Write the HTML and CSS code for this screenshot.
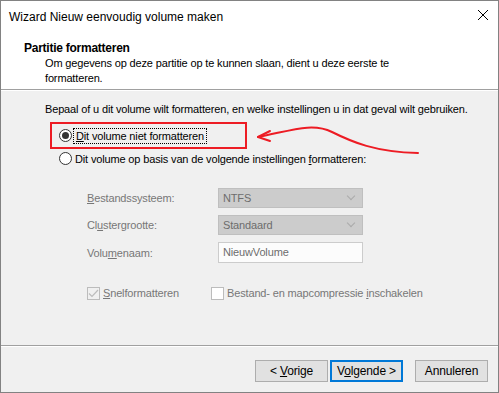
FILE: index.html
```html
<!DOCTYPE html>
<html lang="nl">
<head>
  <meta charset="UTF-8" />
  <title>Wizard Nieuw eenvoudig volume maken</title>
  <link rel="stylesheet" href="styles.css">
</head>
<body>
  <div class="window">
    <div class="titlebar">
      <span class="title">Wizard Nieuw eenvoudig volume maken</span>
      <svg class="close" width="12" height="12" viewBox="0 0 12 12">
        <path d="M1 1 L11 11 M11 1 L1 11" stroke="#000" stroke-width="1" fill="none"/>
      </svg>
    </div>

    <div class="header">
      <div class="heading">Partitie formatteren</div>
      <div class="subtext">Om gegevens op deze partitie op te kunnen slaan, dient u deze eerste te<br>formatteren.</div>
    </div>
    <div class="sep"></div>

    <div class="content">
      <p class="intro">Bepaal of u dit volume wilt formatteren, en welke instellingen u in dat geval wilt gebruiken.</p>

      <div class="options">
        <div class="radio-row">
          <span class="radio checked"></span>
          <span class="focus"><u>D</u>it volume niet formatteren</span>
        </div>
        <div class="radio-row">
          <span class="radio"></span>
          <span>Dit volume op basis van de volgende instellingen <u>f</u>ormatteren:</span>
        </div>
      </div>

      <div class="settings">
        <span class="label"><u>B</u>estandssysteem:</span>
        <div class="combo"><span>NTFS</span><span class="chev"></span></div>
        <span class="label">Cl<u>u</u>stergrootte:</span>
        <div class="combo"><span>Standaard</span><span class="chev"></span></div>
        <span class="label">Volu<u>m</u>enaam:</span>
        <div class="textbox">NieuwVolume</div>
      </div>

      <div class="checks">
        <div class="check-row">
          <span class="checkbox checked">
            <svg width="11" height="11" viewBox="0 0 11 11"><path d="M1 5.5 L4 8.5 L10 2" stroke="#bcbcbc" stroke-width="1.2" fill="none"/></svg>
          </span>
          <span><u>S</u>nelformatteren</span>
        </div>
        <div class="check-row">
          <span class="checkbox"></span>
          <span>Bestand- en mapcompressie <u>i</u>nschakelen</span>
        </div>
      </div>

      <!-- annotation drawn over the screenshot -->
      <div class="annot-box"></div>
      <svg class="annot-arrow" width="499" height="80" viewBox="0 100 499 80">
        <path d="M258 137 C 290 131, 312 122, 332 132 S 375 152, 418 153" stroke="#ed1c24" stroke-width="2" fill="none" stroke-linecap="round"/>
        <path d="M270 131 L258 137 L270 141" stroke="#ed1c24" stroke-width="2" fill="none" stroke-linecap="round" stroke-linejoin="round"/>
      </svg>
    </div>

    <div class="sep"></div>
    <div class="footer">
      <button class="btn">&lt; <u>V</u>orige</button>
      <button class="btn default">V<u>o</u>lgende &gt;</button>
      <button class="btn cancel">Annuleren</button>
    </div>
  </div>
</body>
</html>
```

FILE: styles.css
```css
html, body {
  margin: 0;
  padding: 0;
  background: #f0f0f0;
  font-family: 'Liberation Sans', Arial, sans-serif;
  font-size: 11px;
  letter-spacing: -0.15px;
  color: #000;
}
.window {
  width: 499px;
  height: 393px;
  box-sizing: border-box;
  border: 1px solid #828282;
  display: flex;
  flex-direction: column;
  background: #f0f0f0;
}
.titlebar {
  height: 30px;
  background: #fff;
  display: flex;
  align-items: center;
  justify-content: space-between;
  padding: 0 9px 0 8px;
  flex-shrink: 0;
  font-size: 12px;
  letter-spacing: 0;
}
.title {
  padding-top: 1px;
}
.close {
  margin-top: -2px;
}
.header {
  background: #fff;
  padding: 10px 0 4px 23px;
  height: 44px;
  flex-shrink: 0;
}
.heading {
  font-weight: bold;
  font-size: 12px;
  letter-spacing: -0.25px;
  line-height: 15px;
}
.subtext {
  line-height: 15px;
  padding-left: 21px;
}
.sep {
  height: 1px;
  border-top: 1px solid #a0a0a0;
  background: #fff;
  flex-shrink: 0;
}
.content {
  flex: 1;
  position: relative;
  padding: 11px 0 0 44px;
}
.intro {
  margin: 0;
  line-height: 15px;
}
.options {
  margin-top: 7px;
  padding-left: 14px;
}
.radio-row {
  display: flex;
  align-items: center;
  gap: 3px;
  height: 23px;
}
.radio {
  width: 11px;
  height: 11px;
  border: 1px solid #333;
  border-radius: 50%;
  background: #fff;
  position: relative;
}
.radio.checked::after {
  content: '';
  position: absolute;
  left: 2px;
  top: 2px;
  width: 7px;
  height: 7px;
  border-radius: 50%;
  background: #333;
}
.focus {
  outline: 1px dotted #000;
  outline-offset: 1px;
  padding: 0 1px;
}
.settings {
  display: grid;
  grid-template-columns: 131px 145px;
  row-gap: 7px;
  align-items: center;
  margin: 18px 0 0 42px;
  color: #777;
}
.combo {
  height: 20px;
  box-sizing: border-box;
  background: #ccc;
  border: 1px solid #bfbfbf;
  display: flex;
  align-items: center;
  justify-content: space-between;
  padding: 0 8px 0 4px;
  color: #6d6d6d;
}
.chev {
  width: 5px;
  height: 5px;
  border-right: 1px solid #aaa;
  border-bottom: 1px solid #aaa;
  transform: rotate(45deg);
  margin-top: -4px;
}
.textbox {
  height: 21px;
  box-sizing: border-box;
  background: #fcfcfc;
  border: 1px solid #ccc;
  padding: 3px 4px 0;
  color: #6d6d6d;
}
.checks {
  display: flex;
  margin: 23px 0 0 42px;
  color: #777;
}
.check-row {
  display: flex;
  align-items: center;
  gap: 3px;
  line-height: 15px;
}
.check-row + .check-row {
  margin-left: 32px;
}
.checkbox {
  width: 11px;
  height: 11px;
  border: 1px solid #bcbcbc;
  background: #fff;
  display: flex;
  align-items: center;
  justify-content: center;
}
.checkbox.checked {
  background: #f0f0f0;
}
.annot-box {
  position: absolute;
  left: 49px;
  top: 31px;
  width: 193px;
  height: 23px;
  border: 2px solid #ed1c24;
}
.annot-arrow {
  position: absolute;
  left: -1px;
  top: 9px;
}
.footer {
  height: 45px;
  display: flex;
  justify-content: flex-end;
  align-items: flex-start;
  padding: 13px 10px 0 0;
  box-sizing: border-box;
  flex-shrink: 0;
}
.btn {
  width: 73px;
  height: 22px;
  box-sizing: border-box;
  background: #e1e1e1;
  border: 1px solid #adadad;
  font-family: inherit;
  font-size: 12px;
  letter-spacing: -0.15px;
  color: #000;
  padding: 0;
  margin-left: 2px;
}
.btn.default {
  border: 2px solid #0078d7;
}
.btn.cancel {
  margin-left: 12px;
}
```
